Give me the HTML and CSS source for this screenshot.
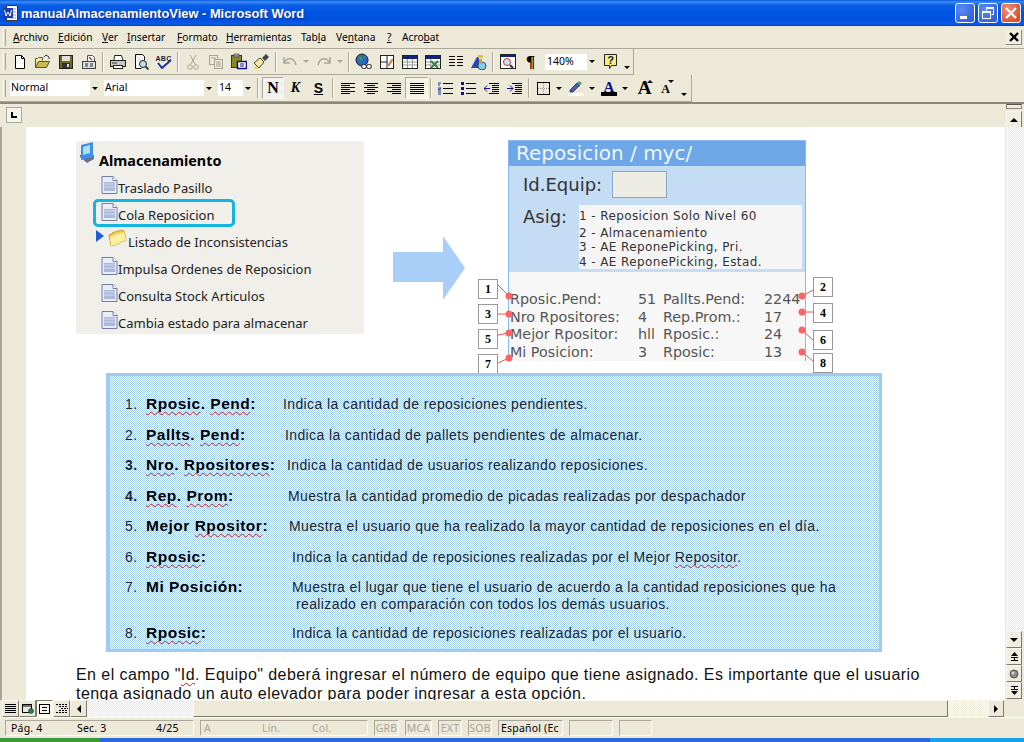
FILE: index.html
```html
<!DOCTYPE html>
<html lang="es">

<head>
    <meta charset="UTF-8">
    <title>manualAlmacenamientoView - Microsoft Word</title>
    <link rel="stylesheet" href="styles.css">
</head>

<body>
    <svg class="defs" width="0" height="0">
        <symbol id="doc-icon" viewBox="0 0 17 18">
            <path d="M1 .5h11l4 4v13H1z" fill="#e8edf8" stroke="#6f7fa8" />
            <path d="M12 .5v4h4" fill="#fff" stroke="#6f7fa8" />
            <rect x="3" y="6" width="11" height="9" fill="#aab8dc" />
            <path d="M3 8h11M3 11h11" stroke="#d5dcf0" />
        </symbol>
    </svg>

    <header class="titlebar">
        <svg class="app-icon" width="15" height="16" viewBox="0 0 15 16">
            <rect x="3.5" y=".5" width="11" height="15" fill="#fff" stroke="#333" />
            <path d="M6 4h7M6 7h7M6 10h7M6 13h7" stroke="#8896b8" />
            <rect x="0" y="3" width="10" height="10" fill="#1f3fa8" />
            <path d="M1.5 5l1.500 6 2-4 2 4 1.500-6" fill="none" stroke="#fff" />
        </svg>
        <span class="title-text">manualAlmacenamientoView - Microsoft Word</span>
        <div class="win-buttons">
            <div class="win-btn"><svg width="20" height="20" viewBox="0 0 20 20">
                    <rect x="5" y="13" width="7" height="3" fill="#fff" />
                </svg></div>
            <div class="win-btn"><svg width="20" height="20" viewBox="0 0 20 20">
                    <path d="M8.5 5.500h7v6h-2M8.500 5.500v2" fill="none" stroke="#fff" />
                    <path d="M8 4.500h8" stroke="#fff" />
                    <rect x="4.5" y="8.500" width="8" height="7" fill="none" stroke="#fff" />
                    <path d="M4 9.500h9" stroke="#fff" />
                </svg></div>
            <div class="win-btn win-close"><svg width="20" height="20" viewBox="0 0 20 20">
                    <path d="M5 5l10 10M15 5L5 15" stroke="#fff" stroke-width="2.2" />
                </svg></div>
        </div>
    </header>

    <nav class="menubar">
        <i class="grip"></i>
        <span class="menu-item m1"><u>A</u>rchivo</span>
        <span class="menu-item m2"><u>E</u>dición</span>
        <span class="menu-item m3"><u>V</u>er</span>
        <span class="menu-item m4"><u>I</u>nsertar</span>
        <span class="menu-item m5"><u>F</u>ormato</span>
        <span class="menu-item m6"><u>H</u>erramientas</span>
        <span class="menu-item m7">Tab<u>l</u>a</span>
        <span class="menu-item m8">Ve<u>n</u>tana</span>
        <span class="menu-item m9"><u>?</u></span>
        <span class="menu-item m10">Acro<u>b</u>at</span>
        <div class="doc-close"><svg width="10" height="10" viewBox="0 0 10 10">
                <path d="M1 1l8 8M9 1L1 9" stroke="#000" stroke-width="2.4" />
            </svg></div>
    </nav>

    <div class="toolbar tb-standard">
        <i class="grip"></i>
        <div class="tool"><svg width="16" height="16" viewBox="0 0 16 16">
                <path d="M3.5 1.500h6l3 3v10h-9z" fill="#fff" stroke="#000" />
                <path d="M9.5 1.500v3h3" fill="none" stroke="#000" />
            </svg></div>
        <div class="tool"><svg width="17" height="16" viewBox="0 0 17 16">
                <path d="M1.5 13.500v-9h2l1-1h4v3" fill="#f4e9a0" stroke="#555" />
                <path d="M1.5 13.500l3-6h11l-3 6z" fill="#c9b84a" stroke="#555" />
                <path d="M10 3l2-2 3 2M15 3v2" fill="none" stroke="#333" />
            </svg></div>
        <div class="tool"><svg width="16" height="16" viewBox="0 0 16 16">
                <rect x="1.5" y="1.500" width="13" height="13" fill="#6b6a1e" stroke="#222" />
                <rect x="4" y="2" width="8" height="5" fill="#dedede" />
                <rect x="4" y="9" width="8" height="5" fill="#333" />
                <rect x="9" y="10" width="2" height="3" fill="#ddd" />
            </svg></div>
        <div class="tool"><svg width="16" height="16" viewBox="0 0 16 16">
                <path d="M6.5 1.500h5l2 2v4h-7z" fill="#fff" stroke="#555" />
                <rect x="1.5" y="7.500" width="13" height="7" fill="#d8dde8" stroke="#444" />
                <path d="M4 10h3M4 12h3M9 10h3M9 12h3" stroke="#333" />
                <path d="M8 3l3 3" stroke="#c33" stroke-width="1.5" />
            </svg></div>
        <i class="sep"></i>
        <div class="tool"><svg width="16" height="16" viewBox="0 0 16 16">
                <path d="M4.5 1.500h7l1.500 5h-9z" fill="#fff" stroke="#222" />
                <rect x=".5" y="6.500" width="15" height="6" fill="#c8c8c0" stroke="#222" />
                <rect x="3.5" y="11.500" width="9" height="3" fill="#fff" stroke="#222" />
                <path d="M2 9h5" stroke="#333" />
            </svg></div>
        <div class="tool"><svg width="16" height="16" viewBox="0 0 16 16">
                <path d="M2.5 .5h7l2 2v4M2.500.5v14h6" fill="#fff" stroke="#111" />
                <circle cx="10" cy="10" r="3.5" fill="#b8e4f0" stroke="#222" />
                <path d="M12.5 12.500l3 3" stroke="#444" stroke-width="2" />
            </svg></div>
        <div class="tool tool-spell"><span class="abc">ABC</span><svg width="16" height="10" viewBox="0 0 16 10">
                <path d="M2 4l4 5 9-8" fill="none" stroke="#1c2f9c" stroke-width="2" />
            </svg></div>
        <i class="sep"></i>
        <div class="tool"><svg width="12" height="16" viewBox="0 0 12 16">
                <path d="M3 1l5 9M9 1L4 10" stroke="#a8a598" />
                <circle cx="3" cy="13" r="2.3" fill="none" stroke="#a8a598" />
                <circle cx="9" cy="13" r="2.3" fill="none" stroke="#a8a598" />
            </svg></div>
        <div class="tool"><svg width="16" height="16" viewBox="0 0 16 16">
                <rect x="1.5" y="1.500" width="8" height="9" fill="#ece9d8" stroke="#a8a598" />
                <rect x="6.5" y="5.500" width="8" height="9" fill="#ece9d8" stroke="#a8a598" />
                <path d="M8 8h5M8 10h5M8 12h5M3 4h5" stroke="#a8a598" />
            </svg></div>
        <div class="tool"><svg width="17" height="17" viewBox="0 0 17 17">
                <rect x="1.5" y="2.500" width="10" height="12" fill="#8a8620" stroke="#333" />
                <rect x="4" y="1" width="5" height="3" fill="#999" stroke="#333" stroke-width=".5" />
                <rect x="7.5" y="8.500" width="9" height="7" fill="#fff" stroke="#10108a" stroke-width="1.5" />
                <path d="M10 11h4M10 13h4" stroke="#10108a" />
            </svg></div>
        <div class="tool"><svg width="17" height="17" viewBox="0 0 17 17">
                <path d="M1 10l6-5 4 4-5 6z" fill="#f5e9a0" stroke="#444" />
                <path d="M9 5l4-4 3 3-4 4z" fill="#444" />
                <path d="M2 14l2 2" stroke="#f2d400" stroke-width="2" />
            </svg></div>
        <i class="sep"></i>
        <div class="tool tool-wide"><svg width="15" height="11" viewBox="0 0 15 11">
                <path d="M1 1v6h6M1 7c3-6 10-6 12 2" fill="none" stroke="#aaa799" stroke-width="1.5" />
            </svg></div>
        <i class="caret off"></i>
        <div class="tool"><svg width="15" height="11" viewBox="0 0 15 11">
                <path d="M14 1v6H8M14 7C11 1 4 1 2 9" fill="none" stroke="#aaa799" stroke-width="1.5" />
            </svg></div>
        <i class="caret off"></i>
        <i class="sep"></i>
        <div class="tool"><svg width="18" height="17" viewBox="0 0 18 17">
                <circle cx="7" cy="7" r="6" fill="#2b63c8" stroke="#123" />
                <path d="M3 3l4 1 1 3-3 1zM8 2l3 2-1 2z" fill="#3a9a3a" />
                <rect x="6.5" y="11.500" width="5" height="4" rx="2" fill="#eee" stroke="#222" />
                <rect x="11.5" y="11.500" width="5" height="4" rx="2" fill="#eee" stroke="#222" />
            </svg></div>
        <div class="tool"><svg width="16" height="16" viewBox="0 0 16 16">
                <rect x="1.5" y="1.500" width="13" height="13" fill="#fff" stroke="#222" />
                <path d="M8 1.500v13M1.500 8h7" stroke="#222" />
                <path d="M9 11l4-6 1 1-4 6z" fill="#e0a020" stroke="#a33" stroke-width=".5" />
            </svg></div>
        <div class="tool"><svg width="16" height="14" viewBox="0 0 16 14">
                <rect x=".5" y=".5" width="15" height="13" fill="#fff" stroke="#222" />
                <rect x="1" y="1" width="14" height="3" fill="#10247c" />
                <path d="M1 7h14M1 10h14M5.500 4v9M10.500 4v9" stroke="#999" />
            </svg></div>
        <div class="tool"><svg width="16" height="14" viewBox="0 0 16 14">
                <rect x=".5" y=".5" width="15" height="13" fill="#fff" stroke="#222" />
                <rect x="1" y="1" width="14" height="3" fill="#10247c" />
                <path d="M1 7h14M1 10h14M5.500 4v9" stroke="#999" />
                <path d="M6 6l7 7M13 6l-7 7" stroke="#2f8a3a" stroke-width="2" />
            </svg></div>
        <div class="tool"><svg width="14" height="12" viewBox="0 0 14 12">
                <path d="M0 .5h6M0 3.500h6M0 6.500h6M0 9.500h6M8 .5h6M8 3.500h6M8 6.500h6M8 9.500h6" stroke="#000" />
            </svg></div>
        <div class="tool"><svg width="17" height="16" viewBox="0 0 17 16">
                <path d="M1 14L7 3h2v11" fill="#2848b0" />
                <path d="M8 1h5v3H8z" fill="#e8c020" />
                <circle cx="12" cy="12" r="4" fill="#7cd0e8" stroke="#2a5a78" />
                <rect x="9" y="5" width="3" height="5" fill="#e0a020" />
            </svg></div>
        <i class="sep"></i>
        <div class="tool"><svg width="16" height="16" viewBox="0 0 16 16">
                <rect x=".5" y=".5" width="15" height="14" fill="#fff" stroke="#222" />
                <rect x="1" y="1" width="14" height="2" fill="#10247c" />
                <circle cx="7" cy="8" r="3.5" fill="#c4e4f0" stroke="#c33" />
                <path d="M10 11l3 3" stroke="#333" stroke-width="2" />
            </svg></div>
        <div class="tool"><span class="pilcrow">¶</span></div>
        <div class="combo combo-zoom"><span>140%</span><b><i class="caret"></i></b></div>
        <div class="tool"><svg width="16" height="17" viewBox="0 0 16 17">
                <path d="M1.5 1.500h12v11h-5l-2 3v-3h-5z" fill="#f7f06a" stroke="#222" />
                <text x="7.5" y="11" class="help-mark">?</text>
            </svg></div>
        <i class="caret caret-end"></i>
    </div>

    <div class="toolbar tb-format">
        <i class="grip"></i>
        <div class="combo combo-style"><span>Normal</span><b><i class="caret"></i></b></div>
        <div class="combo combo-font"><span>Arial</span><b><i class="caret"></i></b></div>
        <div class="combo combo-size"><span>14</span><b><i class="caret"></i></b></div>
        <i class="sep"></i>
        <div class="tool tool-on tool-bold">N</div>
        <div class="tool tool-italic">K</div>
        <div class="tool tool-under">S</div>
        <i class="sep"></i>
        <div class="tool"><svg width="14" height="11" viewBox="0 0 14 11">
                <path d="M0 .5h14M0 2.500h9M0 4.500h14M0 6.500h9M0 8.500h14M0 10.500h9" stroke="#000" />
            </svg></div>
        <div class="tool"><svg width="14" height="11" viewBox="0 0 14 11">
                <path d="M0 .5h14M3 2.500h8M0 4.500h14M3 6.500h8M0 8.500h14M3 10.500h8" stroke="#000" />
            </svg></div>
        <div class="tool"><svg width="14" height="11" viewBox="0 0 14 11">
                <path d="M0 .5h14M5 2.500h9M0 4.500h14M5 6.500h9M0 8.500h14M5 10.500h9" stroke="#000" />
            </svg></div>
        <div class="tool tool-on"><svg width="14" height="11" viewBox="0 0 14 11">
                <path d="M0 .5h14M0 2.500h14M0 4.500h14M0 6.500h14M0 8.500h14M0 10.500h14" stroke="#000" />
            </svg></div>
        <i class="sep"></i>
        <div class="tool"><svg width="15" height="13" viewBox="0 0 15 13">
                <path d="M0 1h3M1 2v2M0 6h3L0 8h3M0 10h3M0 12h3" stroke="#1c2f9c" fill="none" />
                <path d="M5 1.500h10M5 6.500h10M5 11.500h10" stroke="#000" />
            </svg></div>
        <div class="tool"><svg width="15" height="13" viewBox="0 0 15 13">
                <path d="M0 0h3v3H0zM0 5h3v3H0zM0 10h3v3H0z" fill="#10108a" />
                <path d="M5 1.500h10M5 6.500h10M5 11.500h10" stroke="#000" />
            </svg></div>
        <div class="tool"><svg width="15" height="13" viewBox="0 0 15 13">
                <path d="M5 1.500h10M8 3.500h7M8 5.500h7M8 7.500h7M8 9.500h7M5 11.500h10" stroke="#000" />
                <path d="M0 6.500h6M3 3.500l-3 3 3 3" fill="none" stroke="#10108a" />
            </svg></div>
        <div class="tool"><svg width="15" height="13" viewBox="0 0 15 13">
                <path d="M5 1.500h10M8 3.500h7M8 5.500h7M8 7.500h7M8 9.500h7M5 11.500h10" stroke="#000" />
                <path d="M0 6.500h6M3 3.500l3 3-3 3" fill="none" stroke="#10108a" />
            </svg></div>
        <i class="sep"></i>
        <div class="tool tool-tight"><svg width="13" height="13" viewBox="0 0 13 13">
                <rect x=".5" y=".5" width="12" height="12" fill="none" stroke="#000" />
                <path d="M6.500 1v11M1 6.500h11" stroke="#999" stroke-dasharray="1 1" />
            </svg></div>
        <i class="caret"></i>
        <div class="tool tool-tight"><svg width="16" height="16" viewBox="0 0 16 16">
                <path d="M2 10l7-7 3 2-7 7H2z" fill="#4a60b8" stroke="#222" stroke-width=".7" />
                <path d="M9 3l2-2 3 2-2 2z" fill="#5aa05a" />
                <rect y="13" width="16" height="3" fill="#fff" />
            </svg></div>
        <i class="caret"></i>
        <div class="tool tool-tight"><svg width="16" height="16" viewBox="0 0 16 16">
                <text x="8" y="11.500" class="color-a">A</text>
                <rect y="12" width="16" height="4" fill="#000" />
            </svg></div>
        <i class="caret"></i>
        <div class="tool tool-grow"><span class="big-a">A</span><i class="mini-up"></i></div>
        <div class="tool tool-shrink"><span class="small-a">A</span><i class="mini-up"></i></div>
        <i class="caret caret-end2"></i>
    </div>

    <div class="rulerbar">
        <div class="tab-select"><svg width="6" height="6" viewBox="0 0 6 6">
                <path d="M1 0v5h5" fill="none" stroke="#000" stroke-width="2" />
            </svg></div>
        <div class="scroll-top">
            <div class="split-handle"></div>
            <div class="sbtn"><i class="arr-up"></i></div>
        </div>
    </div>

    <div class="workspace">
        <div class="gutter"></div>
        <main class="page">
            <section class="figures">
                <div class="menu-panel">
                    <div class="menu-head">
                        <svg class="root-icon" width="17" height="23" viewBox="0 0 17 23">
                            <path d="M1 15l7 6 7-4v-4H1z" fill="#6f6f90" />
                            <path d="M2 3l12-3v15L2 18z" fill="#3f8ee8" />
                            <path d="M4 5l7-2v8l-7 2z" fill="#a8e0f8" />
                        </svg>
                        <strong>Almacenamiento</strong>
                    </div>
                    <div class="menu-row"><svg width="17" height="18"><use href="#doc-icon" /></svg><span>Traslado Pasillo</span></div>
                    <div class="menu-row"><svg width="17" height="18"><use href="#doc-icon" /></svg><span>Cola Reposicion</span></div>
                    <div class="menu-row menu-folder">
                        <i class="tri"></i>
                        <svg width="19" height="18" viewBox="0 0 19 18">
                            <path d="M1 6l3-1V4l3-1 7-2 2 1 2 9-11 5-4 1z" fill="#f2cf50" stroke="#c8a020" />
                            <path d="M2 8l14-5 2 8-11 5-4 1z" fill="#fdeea0" />
                        </svg>
                        <span>Listado de Inconsistencias</span>
                    </div>
                    <div class="menu-row"><svg width="17" height="18"><use href="#doc-icon" /></svg><span>Impulsa Ordenes de Reposicion</span></div>
                    <div class="menu-row"><svg width="17" height="18"><use href="#doc-icon" /></svg><span>Consulta Stock Articulos</span></div>
                    <div class="menu-row"><svg width="17" height="18"><use href="#doc-icon" /></svg><span>Cambia estado para almacenar</span></div>
                    <div class="menu-mark"></div>
                </div>

                <svg class="arrow" width="73" height="64" viewBox="0 0 73 64">
                    <path d="M0 16h50V0l22 32-22 32V46H0z" fill="#a9cff8" />
                </svg>

                <div class="device">
                    <div class="device-head">Reposicion / myc/</div>
                    <div class="device-form">
                        <div class="form-line">
                            <span class="form-label">Id.Equip:</span>
                            <div class="form-input"></div>
                        </div>
                        <div class="form-line form-asig">
                            <span class="form-label">Asig:</span>
                            <div class="asig-list">
                                <div class="asig-first">1 - Reposicion Solo Nivel 60</div>
                                <div>2 - Almacenamiento</div>
                                <div>3 - AE ReponePicking, Pri.</div>
                                <div>4 - AE ReponePicking, Estad.</div>
                            </div>
                        </div>
                    </div>
                    <div class="device-stats">
                        <span>Rposic.Pend:</span><span>51</span><span>Pallts.Pend:</span><span>2244</span>
                        <span>Nro Rpositores:</span><span>4</span><span>Rep.Prom.:</span><span>17</span>
                        <span>Mejor Rpositor:</span><span>hll</span><span>Rposic.:</span><span>24</span>
                        <span>Mi Posicion:</span><span>3</span><span>Rposic:</span><span>13</span>
                    </div>
                </div>

                <svg class="leaders" width="400" height="110" viewBox="0 0 400 110">
                    <g stroke="#f05050" fill="none">
                        <path d="M20 16l11 11M335 21l-11 6M20 45h11M335 43h-11M20 66l11-2M335 71l-11-10M20 94l11-5M335 92l-11-9" />
                    </g>
                    <g fill="#ff6464">
                        <circle cx="31" cy="27" r="3.5" />
                        <circle cx="324" cy="27" r="3.5" />
                        <circle cx="31" cy="45" r="3.5" />
                        <circle cx="324" cy="43" r="3.5" />
                        <circle cx="31" cy="64" r="3.5" />
                        <circle cx="324" cy="61" r="3.5" />
                        <circle cx="31" cy="89" r="3.5" />
                        <circle cx="324" cy="83" r="3.5" />
                    </g>
                </svg>
                <div class="tag t1">1</div>
                <div class="tag t2">2</div>
                <div class="tag t3">3</div>
                <div class="tag t4">4</div>
                <div class="tag t5">5</div>
                <div class="tag t6">6</div>
                <div class="tag t7">7</div>
                <div class="tag t8">8</div>
            </section>

            <ol class="legend">
                <li class="row-1"><span class="num">1.</span><b class="lbl"><em>Rposic</em>. <em>Pend</em>:</b><span>Indica la cantidad de reposiciones pendientes.</span></li>
                <li class="row-2"><span class="num">2.</span><b class="lbl"><em>Pallts</em>. <em>Pend</em>:</b><span>Indica la cantidad de pallets pendientes de almacenar.</span></li>
                <li class="row-3"><b class="num">3.</b><b class="lbl"><em>Nro</em>. <em>Rpositores</em>:</b><span>Indica la cantidad de usuarios realizando reposiciones.</span></li>
                <li class="row-4"><b class="num">4.</b><b class="lbl"><em>Rep</em>. <em>Prom</em>:</b><span>Muestra la cantidad promedio de picadas realizadas por despachador</span></li>
                <li class="row-5"><span class="num">5.</span><b class="lbl">Mejor <em>Rpositor</em>:</b><span>Muestra el usuario que ha realizado la mayor cantidad de reposiciones en el día.</span></li>
                <li class="row-6"><span class="num">6.</span><b class="lbl"><em>Rposic</em>:</b><span>Indica la cantidad de reposiciones realizadas por el Mejor <em>Repositor</em>.</span></li>
                <li class="row-6 row-tall"><span class="num">7.</span><b class="lbl">Mi Posición:</b><span>Muestra el lugar que tiene el usuario de acuerdo a la cantidad reposiciones que ha<br><span class="cont">realizado en comparación con todos los demás usuarios.</span></span></li>
                <li class="row-6"><span class="num">8.</span><b class="lbl"><em>Rposic</em>:</b><span>Indica la cantidad de reposiciones realizadas por el usuario.</span></li>
            </ol>

            <p class="body-text">En el campo "<em>Id</em>. Equipo" deberá ingresar el número de equipo que tiene asignado. Es importante que el usuario<br>tenga asignado un auto elevador para poder ingresar a esta opción.</p>
        </main>
        <aside class="vscroll">
            <div class="track"></div>
            <div class="sbtn"><i class="arr-down"></i></div>
            <div class="sbtn"><svg width="9" height="9" viewBox="0 0 9 9">
                    <path d="M4.500 0L8 4H1zM1 5h7v1H1zM4 5h1v3H4zM1 8h7v1H1z" fill="#000" />
                </svg></div>
            <div class="sbtn"><svg width="10" height="10" viewBox="0 0 10 10">
                    <circle cx="5" cy="5" r="4" fill="#8a8a8a" stroke="#555" />
                    <circle cx="4" cy="4" r="1.5" fill="#d8d8d8" />
                </svg></div>
            <div class="sbtn"><svg width="9" height="9" viewBox="0 0 9 9">
                    <path d="M1 0h7v1H1zM4 1h1v3H4zM1 3h7v1H1zM1 5h7L4.500 9z" fill="#000" />
                </svg></div>
        </aside>
    </div>

    <div class="hscroll">
        <div class="view-btns">
            <div class="view-btn"><svg width="11" height="9" viewBox="0 0 11 9">
                    <path d="M0 .5h11M0 2.500h11M0 4.500h11M0 6.500h11M0 8.500h11" stroke="#000" />
                </svg></div>
            <div class="view-btn"><svg width="12" height="10" viewBox="0 0 12 10">
                    <rect x=".5" y=".5" width="9" height="8" fill="none" stroke="#000" />
                    <path d="M1 2h8" stroke="#000" />
                    <circle cx="9" cy="7" r="2.5" fill="#2a7a5a" stroke="#124" stroke-width=".5" />
                </svg></div>
            <div class="view-btn view-on"><svg width="11" height="10" viewBox="0 0 11 10">
                    <rect x=".5" y=".5" width="10" height="9" fill="none" stroke="#000" />
                    <path d="M3 3.500h5M3 6.500h5" stroke="#000" />
                </svg></div>
            <div class="view-btn"><svg width="12" height="9" viewBox="0 0 12 9">
                    <path d="M0 .5h12M3 2.500h9M5 4.500h7M3 6.500h9M0 8.500h12" stroke="#000" stroke-dasharray="2 1" />
                </svg></div>
            <div class="view-btn"><i class="arr-left"></i></div>
        </div>
        <div class="h-track"></div>
        <div class="h-thumb"></div>
        <div class="h-track h-track-end"></div>
        <div class="sbtn h-btn"><i class="arr-right"></i></div>
    </div>

    <footer class="statusbar">
        <div class="panel p-page"><span>Pág. 4</span><span>Sec. 3</span><span>4/25</span></div>
        <div class="panel p-pos off"><span>A</span><span>Lín.</span><span>Col.</span></div>
        <div class="panel p-flag f-grb off">GRB</div>
        <div class="panel p-flag f-mca off">MCA</div>
        <div class="panel p-flag f-ext off">EXT</div>
        <div class="panel p-flag f-ext off">SOB</div>
        <div class="panel p-lang">Español (Ec</div>
        <div class="panel p-blank"></div>
        <div class="panel p-blank2"></div>
    </footer>
    <div class="taskbar"></div>
</body>

</html>
```

FILE: styles.css
```css
* {
    box-sizing: border-box;
}

html,
body {
    margin: 0;
    height: 100%;
}

body {
    width: 1024px;
    height: 742px;
    overflow: hidden;
    background: #ece9d8;
    display: flex;
    flex-direction: column;
    font-family: "Liberation Sans", sans-serif;
    font-size: 11px;
    color: #000;
}

.defs {
    position: absolute;
}

svg {
    display: block;
    flex: none;
}

/* window title */
.titlebar {
    height: 26px;
    flex: none;
    display: flex;
    align-items: center;
    padding-left: 3px;
    background: linear-gradient(#0a5ce0 0, #3c8cf5 2px, #0a5fe6 5px, #0054e3 12px, #0050dc 20px, #0a5ce8 24px, #003cc0 26px);
}

.app-icon {
    margin-right: 3px;
}

.title-text {
    font-weight: bold;
    font-size: 12.9px;
    color: #fff;
    text-shadow: 1px 1px 0 #0a2c90;
}

.win-buttons {
    margin-left: auto;
    display: flex;
    gap: 3px;
    padding-right: 3px;
}

.win-btn {
    width: 20px;
    height: 20px;
    border: 1px solid #fff;
    border-radius: 3px;
    background: radial-gradient(circle at 30% 30%, #5a8cf0, #2a56d8);
}

.win-btn svg {
    margin: -1px;
}

.win-close {
    background: radial-gradient(circle at 30% 30%, #f09070, #d0401c);
}

/* menu + toolbars */
.menubar {
    height: 23px;
    flex: none;
    display: flex;
    align-items: center;
    border-bottom: 1px solid #aca899;
    position: relative;
}

.grip {
    width: 3px;
    height: 17px;
    margin-left: 3px;
    flex: none;
    border-left: 1px solid #fff;
    border-right: 1px solid #aca899;
    background: #d8d4c4;
}

.toolbar .grip {
    margin-right: 2px;
}

.menu-item {
    font-family: "Noto Sans", sans-serif;
    font-size: 10.2px;
    white-space: nowrap;
}

.menu-item u {
    text-underline-offset: 1px;
}

.m1 { margin-left: 7px; width: 45px; }
.m2 { width: 44px; }
.m3 { width: 25px; }
.m4 { width: 50px; }
.m5 { width: 49px; }
.m6 { width: 75px; }
.m7 { width: 35px; }
.m8 { width: 51px; }
.m9 { width: 15px; }

.doc-close {
    margin-left: auto;
    margin-right: 2px;
    width: 16px;
    height: 15px;
    background: #f0eee2;
    border-right: 1px solid #8c8a7c;
    border-bottom: 1px solid #8c8a7c;
    display: flex;
    align-items: center;
    justify-content: center;
}

.toolbar {
    flex: none;
    display: flex;
    align-items: center;
    border-bottom: 1px solid #aca899;
    border-right: 1px solid #aca899;
}

.tb-standard {
    height: 26px;
    width: 634px;
}

.tb-format {
    height: 27px;
    width: 692px;
}

.tool {
    width: 23px;
    height: 22px;
    flex: none;
    display: flex;
    align-items: center;
    justify-content: center;
    position: relative;
}

.tool-wide {
    width: 22px;
}

.tool-tight {
    width: 22px;
}

.tool-on {
    background: url("data:image/svg+xml,%3Csvg xmlns='http://www.w3.org/2000/svg' width='2' height='2' shape-rendering='crispEdges'%3E%3Crect width='2' height='2' fill='%23fff'/%3E%3Cpath d='M0 0h1v1H0zM1 1h1v1H1z' fill='%23ece9d8'/%3E%3C/svg%3E") 0 0 / 2px 2px;
    border: 1px solid #f8f7f0;
    border-top-color: #aca899;
    border-left-color: #aca899;
}

.sep {
    width: 6px;
    height: 20px;
    flex: none;
    background: linear-gradient(90deg, transparent 2px, #aca899 2px, #aca899 3px, #fff 3px, #fff 4px, transparent 4px);
}

.caret {
    width: 11px;
    flex: none;
    height: 3px;
    position: relative;
}

.caret::after {
    content: "";
    position: absolute;
    left: 2px;
    top: 0;
    border-left: 3px solid transparent;
    border-right: 3px solid transparent;
    border-top: 3px solid #000;
}

.caret.off::after {
    border-top-color: #aaa799;
}

.caret-end {
    margin-top: 12px;
}

.caret-end2 {
    margin-left: 3px;
    margin-top: 12px;
}

.tool-spell {
    flex-direction: column;
    align-items: center;
}

.abc {
    font-size: 7px;
    font-weight: bold;
    line-height: 7px;
    letter-spacing: .3px;
    color: #223;
}

.tool-spell svg {
    margin-top: -3px;
}

.pilcrow {
    font-family: "Liberation Serif", serif;
    font-weight: bold;
    font-size: 17px;
}

.help-mark {
    font-family: "Liberation Sans", sans-serif;
    font-weight: bold;
    font-size: 11px;
    fill: #10108a;
    text-anchor: middle;
}

.color-a {
    font-family: "Liberation Serif", serif;
    font-weight: bold;
    font-size: 15px;
    fill: #10108a;
    text-anchor: middle;
}

.combo {
    height: 16px;
    flex: none;
    display: flex;
    background: #fff;
    font-family: "Noto Sans", sans-serif;
    font-size: 10.5px;
    line-height: 15px;
    padding-left: 1px;
}

.combo span {
    flex: 1;
}

.combo b {
    width: 10px;
    background: #ece9d8;
    display: flex;
    align-items: center;
    justify-content: center;
}

.combo .caret {
    width: 6px;
}

.combo .caret::after {
    left: 0;
}

.combo-zoom {
    width: 52px;
    margin: 0 2px 0 3px;
    padding-left: 2px;
}

.combo-style {
    width: 90px;
    margin-left: 2px;
    margin-right: 4px;
}

.combo-font {
    width: 110px;
    margin-right: 4px;
}

.combo-size {
    width: 35px;
}

.tb-format .combo-size + .sep {
    margin-left: 2px;
}

.tool-bold,
.tool-italic,
.tool-under {
    font-size: 14px;
    font-weight: bold;
    font-family: "Liberation Serif", serif;
}

.tool-bold {
    width: 22px;
    margin-left: 1px;
    font-size: 16px;
}

.tool-italic {
    font-style: italic;
}

.tool-under {
    font-family: "Liberation Sans", sans-serif;
    text-decoration: underline;
}

.tool-grow {
    width: 21px;
    margin-left: 3px;
}

.tool-shrink {
    width: 21px;
}

.big-a {
    font-family: "Liberation Serif", serif;
    font-weight: bold;
    font-size: 19px;
}

.small-a {
    font-family: "Liberation Serif", serif;
    font-weight: bold;
    font-size: 12px;
    margin-top: 3px;
}

.mini-up {
    position: absolute;
    right: 2px;
    top: 3px;
    border-left: 3px solid transparent;
    border-right: 3px solid transparent;
    border-bottom: 3px solid #000;
}

.tool-shrink .mini-up {
    border-bottom: 0;
    border-top: 3px solid #000;
}

.rulerbar {
    height: 25px;
    flex: none;
    border-top: 2px solid #8a887a;
    display: flex;
    padding: 3px 0 0 6px;
    justify-content: space-between;
}

.tab-select {
    width: 16px;
    height: 16px;
    background: #f5f4ec;
    border: 1px solid #aca899;
    display: flex;
    align-items: center;
    justify-content: center;
}

.scroll-top {
    width: 19px;
    padding-left: 1px;
    margin-top: -3px;
}

.split-handle {
    width: 16px;
    height: 5px;
    margin-bottom: 2px;
    border: 1px solid #8a887a;
    border-top-color: #555;
    background: #f0eee2;
}

/* document area */
.workspace {
    flex: 1;
    min-height: 0;
    display: flex;
}

.gutter {
    width: 26px;
    flex: none;
    border-left: 2px solid #a8a698;
}

.page {
    flex: 1;
    min-width: 0;
    background: #fff;
    overflow: hidden;
}

.figures {
    height: 246px;
    position: relative;
}

.menu-panel {
    position: absolute;
    left: 50px;
    top: 14px;
    width: 288px;
    height: 193px;
    background: #f1efea;
    font-family: "Noto Sans", sans-serif;
    font-size: 13px;
    color: #222;
}

.menu-head {
    height: 35px;
    position: relative;
    padding: 10px 0 0 23px;
    font-size: 14.4px;
    color: #000;
}

.root-icon {
    position: absolute;
    left: 3px;
    top: 1px;
}

.menu-row {
    height: 27px;
    padding-left: 25px;
    display: flex;
    align-items: flex-start;
}

.menu-row span {
    margin-top: 3px;
    white-space: nowrap;
}

.menu-folder {
    padding-left: 20px;
}

.menu-folder svg {
    margin-left: 4px;
    margin-top: -1px;
}

.menu-folder span {
    margin-left: 1px;
}

.tri {
    border-left: 8px solid #1c5ed8;
    border-top: 6px solid transparent;
    border-bottom: 6px solid transparent;
}

.menu-mark {
    position: absolute;
    left: 17px;
    top: 58px;
    width: 142px;
    height: 28px;
    border: 3px solid #12b5e0;
    border-radius: 5px;
}

.arrow {
    position: absolute;
    left: 367px;
    top: 109px;
}

.device {
    position: absolute;
    left: 482px;
    top: 13px;
    width: 298px;
    height: 221px;
    border: 1px solid #8ab8f0;
    border-bottom: 0;
    background: #f7f7f7;
    font-family: "DejaVu Sans", sans-serif;
    color: #444;
}

.device-head {
    height: 25px;
    background: #6ea7e8;
    color: #f0f6ff;
    font-size: 20px;
    line-height: 24px;
    padding-left: 7px;
}

.device-form {
    height: 106px;
    background: #c5dcf5;
    border-bottom: 2px solid #c5dcf5;
    padding: 5px 3px 0 14px;
}

.form-line {
    display: flex;
}

.form-label {
    font-size: 18px;
    color: #333;
    width: 89px;
    line-height: 27px;
}

.form-input {
    width: 55px;
    height: 27px;
    background: #ecebe4;
    border: 1px solid #8aa9c4;
}

.form-asig {
    margin-top: 7px;
}

.form-asig .form-label {
    width: 56px;
    line-height: 24px;
}

.asig-list {
    flex: 1;
    height: 64px;
    background: #f5f5f5;
    font-size: 12px;
    line-height: 14.5px;
    letter-spacing: .4px;
    color: #333;
    white-space: nowrap;
}

.asig-first {
    padding-top: 4px;
    margin-bottom: 2px;
}

.device-stats {
    display: grid;
    grid-template-columns: 128px 25px 101px 1fr;
    grid-auto-rows: 17.7px;
    padding: 19px 0 0 1px;
    font-size: 14.3px;
    line-height: 17px;
    color: #555;
    white-space: nowrap;
}

.leaders {
    position: absolute;
    left: 452px;
    top: 142px;
}

.tag {
    position: absolute;
    width: 20px;
    height: 20px;
    background: #fff;
    border: 1px solid #999;
    font-family: "Liberation Serif", serif;
    font-weight: bold;
    font-size: 12px;
    line-height: 18px;
    text-align: center;
}

.t1 { left: 452px; top: 152px; }
.t2 { left: 787px; top: 150px; }
.t3 { left: 452px; top: 177px; }
.t4 { left: 787px; top: 176px; }
.t5 { left: 452px; top: 202px; }
.t6 { left: 787px; top: 203px; }
.t7 { left: 452px; top: 227px; }
.t8 { left: 787px; top: 226px; }

/* blue legend box */
.legend {
    position: relative;
    list-style: none;
    margin: 0 0 0 80px;
    width: 776px;
    height: 279px;
    padding: 19px 0 0 15px;
    border: 3px solid #9fcbee;
    border-left-width: 4px;
    background: url("data:image/svg+xml,%3Csvg xmlns='http://www.w3.org/2000/svg' width='2' height='2' shape-rendering='crispEdges'%3E%3Crect width='2' height='2' fill='%23fff'/%3E%3Cpath d='M0 0h1v1H0zM1 1h1v1H1z' fill='%23a3cff0'/%3E%3C/svg%3E") 0 0 / 2px 2px;
    font-size: 14px;
    line-height: 17px;
    letter-spacing: .38px;
    color: #222;
}

.legend li {
    display: flex;
    align-items: baseline;
    height: 30.5px;
    white-space: nowrap;
}

.legend .row-tall {
    height: 46px;
}

.num {
    width: 21px;
    flex: none;
}

.lbl {
    flex: none;
    color: #000;
    font-size: 15.5px;
    letter-spacing: .5px;
}

.row-1 .lbl { width: 137px; }
.row-2 .lbl { width: 139px; }
.row-3 .lbl { width: 141px; }
.row-4 .lbl { width: 142px; }
.row-5 .lbl { width: 143px; }
.row-6 .lbl { width: 146px; }

.cont {
    padding-left: 4px;
}

em {
    font-style: normal;
    text-decoration: underline wavy #e01010 1px;
    text-underline-offset: 2px;
    text-decoration-skip-ink: none;
}

.body-text {
    margin: 13px 0 0 50px;
    font-size: 16px;
    letter-spacing: .44px;
    line-height: 19px;
    white-space: nowrap;
    color: #111;
}

/* scrollbars */
.vscroll {
    width: 19px;
    flex: none;
    padding: 0 0 1px 1px;
    display: flex;
    flex-direction: column;
}

.track {
    flex: 1;
    background: url("data:image/svg+xml,%3Csvg xmlns='http://www.w3.org/2000/svg' width='2' height='2' shape-rendering='crispEdges'%3E%3Crect width='2' height='2' fill='%23fff'/%3E%3Cpath d='M0 0h1v1H0zM1 1h1v1H1z' fill='%23ece9d8'/%3E%3C/svg%3E") 0 0 / 2px 2px;
}

.sbtn {
    width: 16px;
    height: 17px;
    flex: none;
    background: #f0eee2;
    border: 1px solid #f8f7f0;
    border-right-color: #7c7a6c;
    border-bottom-color: #7c7a6c;
    display: flex;
    align-items: center;
    justify-content: center;
}

.arr-down {
    border-left: 4px solid transparent;
    border-right: 4px solid transparent;
    border-top: 4px solid #000;
}

.arr-up {
    border-left: 4px solid transparent;
    border-right: 4px solid transparent;
    border-bottom: 4px solid #000;
}

.arr-right {
    border-top: 4px solid transparent;
    border-bottom: 4px solid transparent;
    border-left: 4px solid #000;
}

.arr-left {
    border-top: 4px solid transparent;
    border-bottom: 4px solid transparent;
    border-right: 4px solid #000;
}

.hscroll {
    height: 17px;
    flex: none;
    display: flex;
    padding-left: 2px;
    padding-right: 20px;
}

.view-btns {
    display: flex;
    flex: none;
}

.view-btn {
    width: 17px;
    height: 17px;
    background: #ece9d8;
    border: 1px solid #f8f7f0;
    border-right-color: #7c7a6c;
    border-bottom-color: #7c7a6c;
    display: flex;
    align-items: center;
    justify-content: center;
}

.view-on {
    background: #f8f7f0;
    border-color: #7c7a6c #f8f7f0 #f8f7f0 #7c7a6c;
}

.h-track {
    width: 106px;
    background: url("data:image/svg+xml,%3Csvg xmlns='http://www.w3.org/2000/svg' width='2' height='2' shape-rendering='crispEdges'%3E%3Crect width='2' height='2' fill='%23fff'/%3E%3Cpath d='M0 0h1v1H0zM1 1h1v1H1z' fill='%23ece9d8'/%3E%3C/svg%3E") 0 0 / 2px 2px;
}

.h-thumb {
    flex: 1;
    border: 1px solid #f8f7f0;
    border-right-color: #7c7a6c;
    border-bottom-color: #7c7a6c;
    background: #ece9d8;
}

.h-track-end {
    width: 40px;
}

.h-btn {
    background: #ece9d8;
}

/* status */
.statusbar {
    height: 21px;
    flex: none;
    display: flex;
    align-items: center;
    gap: 6px;
    padding-left: 5px;
    border-top: 1px solid #fff;
    font-family: "Noto Sans", sans-serif;
    font-size: 10.5px;
    letter-spacing: .2px;
}

.panel {
    height: 16px;
    line-height: 14px;
    border: 1px solid #aca899;
    border-right-color: #fff;
    border-bottom-color: #fff;
    white-space: nowrap;
    flex: none;
}

.off {
    color: #a8a598;
}

.p-page {
    width: 189px;
    padding-left: 5px;
    display: flex;
}

.p-page span:nth-child(1) { width: 66px; }
.p-page span:nth-child(2) { width: 79px; }

.p-pos {
    width: 168px;
    padding-left: 3px;
    display: flex;
}

.p-pos span:nth-child(1) { width: 58px; }
.p-pos span:nth-child(2) { width: 50px; }

.p-flag {
    text-align: center;
    overflow: hidden;
}

.f-grb { width: 25px; }
.f-mca { width: 27px; }
.f-ext { width: 24px; }

.p-lang {
    width: 65px;
    padding-left: 2px;
}

.p-blank {
    width: 44px;
}

.p-blank2 {
    width: 33px;
}

.taskbar {
    height: 4px;
    flex: none;
    background: linear-gradient(90deg, #3a9a3a 0 100px, #2a6ad8 100px 930px, #18a0e8 930px);
}
```
